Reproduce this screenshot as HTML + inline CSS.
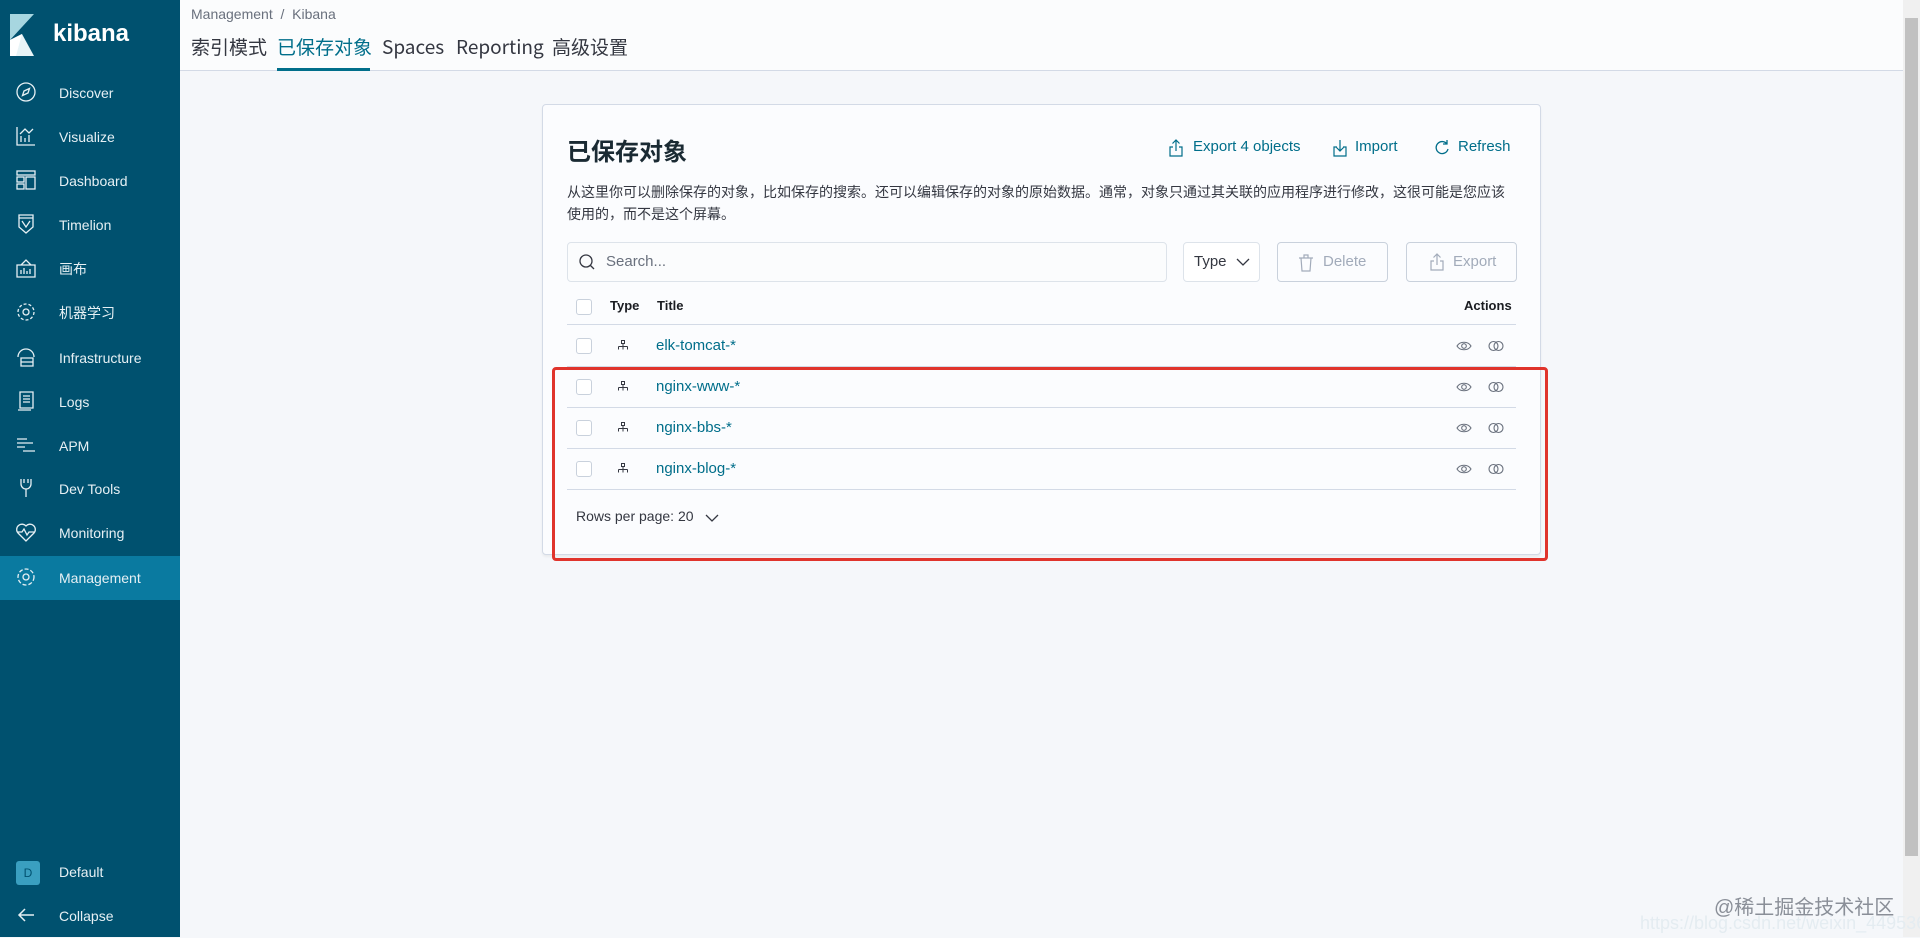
<!DOCTYPE html>
<html><head><meta charset="utf-8"><style>
*{box-sizing:border-box;margin:0;padding:0}
body{width:1920px;height:937px;overflow:hidden;background:#f5f7fa;font-family:"Liberation Sans","Noto Sans CJK SC",sans-serif;position:relative;color:#343741}
.abs{position:absolute}
#side{left:0;top:0;width:180px;height:937px;background:#00516f}
.nav{position:absolute;left:0;width:180px;height:44px;color:#e6f0f4;font-size:14px;line-height:44px}
.nav .t{position:absolute;left:59px;top:0}
.nav svg{position:absolute;left:15px;top:10px}
.nav.act{background:#0a7aa0}
#hdr{left:180px;top:0;width:1723px;height:71px;background:#fbfcfd;border-bottom:1px solid #d3dae6}
.tab{position:absolute;top:34px;font-size:19px;line-height:26px;color:#343741;font-family:"Noto Sans CJK SC",sans-serif}
#panel{left:542px;top:104px;width:999px;height:451px;background:#fbfcfe;border:1px solid #d3dae6;border-radius:4px;box-shadow:0 2px 2px rgba(0,0,0,.05)}
.lnk{position:absolute;top:138px;font-size:15px;color:#006e8a}
.btn{position:absolute;top:242px;height:40px;border:1px solid #c9d1dc;border-radius:4px;font-size:15px;line-height:38px}
.row{position:absolute;left:567px;width:949px;height:1px;background:#d3dae6}
.cb{position:absolute;left:576px;width:16px;height:16px;border:1px solid #c9d1dc;border-radius:3px;background:#fff}
.ti{position:absolute;left:656px;font-size:15px;color:#006e8a}
.ic{position:absolute}
</style></head><body>
<div id="side" class="abs">
 <svg class="abs" style="left:10px;top:14px" width="24" height="42" viewBox="0 0 24 42"><polygon points="0,0 24,0 0,26" fill="#a7d6e0"/><polygon points="0,26 12,20 24,42 0,42" fill="#e8f4f7"/><polygon points="0,26 12,20 6,42 0,42" fill="#fff"/></svg>
 <div class="abs" style="left:53px;top:20px;color:#fff;font-size:24px;font-weight:bold">kibana</div>
 <div class="nav" style="top:71px"><svg width="22" height="22" viewBox="0 0 22 22" fill="none" stroke="#e6f0f4" stroke-width="1.3"><circle cx="11" cy="11" r="9"/><path d="M14.5 7.5 L9 10 L7.5 14.5 L13 12 Z"/></svg><span class="t">Discover</span></div>
 <div class="nav" style="top:115px"><svg width="22" height="22" viewBox="0 0 22 22" fill="none" stroke="#e6f0f4" stroke-width="1.3"><path d="M2 2v18h18M6 17v-6M10 17v-4M14 17v-7M5 9l5-5 4 4 4-4"/></svg><span class="t">Visualize</span></div>
 <div class="nav" style="top:159px"><svg width="22" height="22" viewBox="0 0 22 22" fill="none" stroke="#e6f0f4" stroke-width="1.3"><rect x="2" y="2" width="18" height="4"/><rect x="2" y="8" width="7" height="5"/><rect x="11" y="8" width="9" height="12"/><rect x="2" y="15" width="7" height="5"/></svg><span class="t">Dashboard</span></div>
 <div class="nav" style="top:203px"><svg width="22" height="22" viewBox="0 0 22 22" fill="none" stroke="#e6f0f4" stroke-width="1.3"><path d="M4 2h14v12l-7 6-7-6z M4 5h14 M7 8l4 6 4-6"/></svg><span class="t">Timelion</span></div>
 <div class="nav" style="top:247px"><svg width="22" height="22" viewBox="0 0 22 22" fill="none" stroke="#e6f0f4" stroke-width="1.3"><path d="M2 8h18v12H2z M6 8l5-5 5 5 M6 17v-4M9 17v-6M12 17v-3M15 17v-5"/></svg><span class="t">画布</span></div>
 <div class="nav" style="top:291px"><svg width="22" height="22" viewBox="0 0 22 22" fill="none" stroke="#e6f0f4" stroke-width="1.3"><circle cx="11" cy="11" r="8" stroke-dasharray="3 2"/><circle cx="11" cy="11" r="3"/></svg><span class="t">机器学习</span></div>
 <div class="nav" style="top:336px"><svg width="22" height="22" viewBox="0 0 22 22" fill="none" stroke="#e6f0f4" stroke-width="1.3"><path d="M3 11a8 8 0 0 1 16 0 M6 12h12v8H6z M6 16h12"/></svg><span class="t">Infrastructure</span></div>
 <div class="nav" style="top:380px"><svg width="22" height="22" viewBox="0 0 22 22" fill="none" stroke="#e6f0f4" stroke-width="1.3"><path d="M5 2h13v16H5z M3 20h13 M8 6h7M8 9h7M8 12h7"/></svg><span class="t">Logs</span></div>
 <div class="nav" style="top:424px"><svg width="22" height="22" viewBox="0 0 22 22" fill="none" stroke="#e6f0f4" stroke-width="1.3"><path d="M2 5h10M2 9h16M2 13h8M8 17h12"/></svg><span class="t">APM</span></div>
 <div class="nav" style="top:467px"><svg width="22" height="22" viewBox="0 0 22 22" fill="none" stroke="#e6f0f4" stroke-width="1.3"><path d="M6 2v5a5 5 0 0 0 10 0V2 M9 2v4M13 2v4 M11 12v8"/></svg><span class="t">Dev Tools</span></div>
 <div class="nav" style="top:511px"><svg width="22" height="22" viewBox="0 0 22 22" fill="none" stroke="#e6f0f4" stroke-width="1.3"><path d="M11 20L3 12a5 5 0 0 1 8-7 5 5 0 0 1 8 7z M2 11h5l2-3 3 6 2-3h6"/></svg><span class="t">Monitoring</span></div>
 <div class="nav act" style="top:556px"><svg width="22" height="22" viewBox="0 0 22 22" fill="none" stroke="#e6f0f4" stroke-width="1.3"><circle cx="11" cy="11" r="8" stroke-dasharray="4 2"/><circle cx="11" cy="11" r="3"/></svg><span class="t">Management</span></div>
 <div class="nav" style="top:850px"><div class="abs" style="left:16px;top:11px;width:24px;height:24px;background:#3a9fc0;border-radius:3px;color:#00516f;font-size:12px;line-height:24px;text-align:center">D</div><span class="t">Default</span></div>
 <div class="nav" style="top:894px"><svg width="22" height="22" viewBox="0 0 22 22" fill="none" stroke="#e6f0f4" stroke-width="1.5"><path d="M19 11H4 M10 5l-6 6 6 6"/></svg><span class="t">Collapse</span></div>
</div>
<div id="hdr" class="abs">
 <div class="abs" style="left:11px;top:6px;font-size:14px;color:#69707d">Management&nbsp; / &nbsp;Kibana</div>
 <div class="tab" style="left:11px">索引模式</div>
 <div class="tab" style="left:97px;color:#006e8a">已保存对象</div>
 <div class="abs" style="left:97px;top:68px;width:93px;height:3px;background:#006e8a"></div>
 <div class="tab" style="left:202px">Spaces</div>
 <div class="tab" style="left:276px">Reporting</div>
 <div class="tab" style="left:372px">高级设置</div>
</div>
<div class="abs" style="left:1903px;top:0;width:17px;height:937px;background:#f0f0f0"></div>
<div class="abs" style="left:1905px;top:18px;width:13px;height:838px;background:#c1c1c1"></div>

<div id="panel" class="abs"></div>
<div class="abs" style="left:567px;top:132px;font-size:24px;font-weight:bold;color:#1a2a33">已保存对象</div>
<svg class="ic" style="left:1168px;top:139px" width="16" height="18" viewBox="0 0 16 18" fill="none" stroke="#006e8a" stroke-width="1.2"><path d="M5 8H2v9h12V8h-3 M8 12V1 M4.5 4.5L8 1l3.5 3.5"/></svg>
<div class="lnk" style="left:1193px">Export 4 objects</div>
<svg class="ic" style="left:1332px;top:139px" width="16" height="18" viewBox="0 0 16 18" fill="none" stroke="#006e8a" stroke-width="1.2"><path d="M5 8H2v9h12V8h-3 M8 1v11 M4.5 8.5L8 12l3.5-3.5"/></svg>
<div class="lnk" style="left:1355px">Import</div>
<svg class="ic" style="left:1434px;top:139px" width="16" height="18" viewBox="0 0 16 18" fill="none" stroke="#006e8a" stroke-width="1.3"><path d="M13 5A6 6 0 1 0 14 10 M13 1v4H9"/></svg>
<div class="lnk" style="left:1458px">Refresh</div>
<div class="abs" style="left:567px;top:181px;width:950px;font-size:14px;line-height:22px;color:#343741">从这里你可以删除保存的对象，比如保存的搜索。还可以编辑保存的对象的原始数据。通常，对象只通过其关联的应用程序进行修改，这很可能是您应该使用的，而不是这个屏幕。</div>
<div class="btn" style="left:567px;width:600px;background:#fbfcfd;border-color:#dde3ea"><svg class="ic" style="left:10px;top:10px" width="18" height="18" viewBox="0 0 18 18" fill="none" stroke="#343741" stroke-width="1.3"><circle cx="8" cy="8" r="6"/><path d="M12 12l4 4"/></svg><span class="abs" style="left:38px;color:#69707d">Search...</span></div>
<div class="btn" style="left:1183px;width:77px;background:#fff;border-color:#dde3ea"><span class="abs" style="left:10px;color:#343741">Type</span><svg class="ic" style="left:52px;top:14px" width="14" height="10" viewBox="0 0 14 10" fill="none" stroke="#343741" stroke-width="1.3"><path d="M1 2l6 6 6-6"/></svg></div>
<div class="btn" style="left:1277px;width:111px"><svg class="ic" style="left:20px;top:11px" width="16" height="18" viewBox="0 0 16 18" fill="none" stroke="#a2abba" stroke-width="1.2"><path d="M1 4h14M6 4V1h4v3M3 4l1 13h8l1-13"/></svg><span class="abs" style="left:45px;color:#a2abba">Delete</span></div>
<div class="btn" style="left:1406px;width:111px"><svg class="ic" style="left:22px;top:10px" width="16" height="18" viewBox="0 0 16 18" fill="none" stroke="#a2abba" stroke-width="1.2"><path d="M5 8H2v9h12V8h-3 M8 12V1 M4.5 4.5L8 1l3.5 3.5"/></svg><span class="abs" style="left:46px;color:#a2abba">Export</span></div>

<div class="cb" style="top:299px"></div>
<div class="abs" style="left:610px;top:298px;font-size:13px;font-weight:bold;color:#1a1c21">Type</div>
<div class="abs" style="left:657px;top:298px;font-size:13px;font-weight:bold;color:#1a1c21">Title</div>
<div class="abs" style="left:1464px;top:298px;font-size:13px;font-weight:bold;color:#1a1c21">Actions</div>
<div class="row" style="top:324px"></div>

<div class="cb" style="top:338px"></div><div class="ti" style="top:337px">elk-tomcat-*</div><div class="row" style="top:366px"></div>
<div class="cb" style="top:379px"></div><div class="ti" style="top:378px">nginx-www-*</div><div class="row" style="top:407px"></div>
<div class="cb" style="top:420px"></div><div class="ti" style="top:419px">nginx-bbs-*</div><div class="row" style="top:448px"></div>
<div class="cb" style="top:461px"></div><div class="ti" style="top:460px">nginx-blog-*</div><div class="row" style="top:489px"></div>

<svg width="0" height="0" style="position:absolute"><defs>
<g id="ty" fill="none" stroke="#343741" stroke-width="1"><rect x="4.5" y="0.5" width="3" height="3"/><path d="M6 3.5v3M1.5 6.5h9M1.5 6.5v3M6 6.5v3M10.5 6.5v3"/></g>
<g id="ey" fill="none" stroke="#69707d" stroke-width="1.1"><path d="M1 7c3-5 11-5 14 0c-3 5-11 5-14 0z"/><circle cx="8" cy="7" r="2.3"/></g>
<g id="rl" fill="none" stroke="#69707d" stroke-width="1.1"><circle cx="5.5" cy="7" r="4.5"/><circle cx="10.5" cy="7" r="4.5"/></g>
</defs></svg>
<svg class="ic" style="left:617px;top:340px" width="12" height="11"><use href="#ty"/></svg>
<svg class="ic" style="left:617px;top:381px" width="12" height="11"><use href="#ty"/></svg>
<svg class="ic" style="left:617px;top:422px" width="12" height="11"><use href="#ty"/></svg>
<svg class="ic" style="left:617px;top:463px" width="12" height="11"><use href="#ty"/></svg>
<svg class="ic" style="left:1456px;top:339px" width="16" height="14"><use href="#ey"/></svg><svg class="ic" style="left:1488px;top:339px" width="16" height="14"><use href="#rl"/></svg>
<svg class="ic" style="left:1456px;top:380px" width="16" height="14"><use href="#ey"/></svg><svg class="ic" style="left:1488px;top:380px" width="16" height="14"><use href="#rl"/></svg>
<svg class="ic" style="left:1456px;top:421px" width="16" height="14"><use href="#ey"/></svg><svg class="ic" style="left:1488px;top:421px" width="16" height="14"><use href="#rl"/></svg>
<svg class="ic" style="left:1456px;top:462px" width="16" height="14"><use href="#ey"/></svg><svg class="ic" style="left:1488px;top:462px" width="16" height="14"><use href="#rl"/></svg>

<div class="abs" style="left:576px;top:508px;font-size:14px;color:#343741">Rows per page: 20</div>
<svg class="ic" style="left:705px;top:513px" width="14" height="10" viewBox="0 0 14 10" fill="none" stroke="#343741" stroke-width="1.3"><path d="M1 2l6 6 6-6"/></svg>

<div class="abs" style="left:552px;top:367px;width:996px;height:194px;border:3px solid #e0342c;border-radius:4px"></div>

<div class="abs" style="left:1714px;top:891px;font-size:20px;color:#8a8f98">@稀土掘金技术社区</div>
<div class="abs" style="left:1640px;top:913px;font-size:18px;color:#e4ecf1">https://blog.csdn.net/weixin_44953658</div>
</body></html>
